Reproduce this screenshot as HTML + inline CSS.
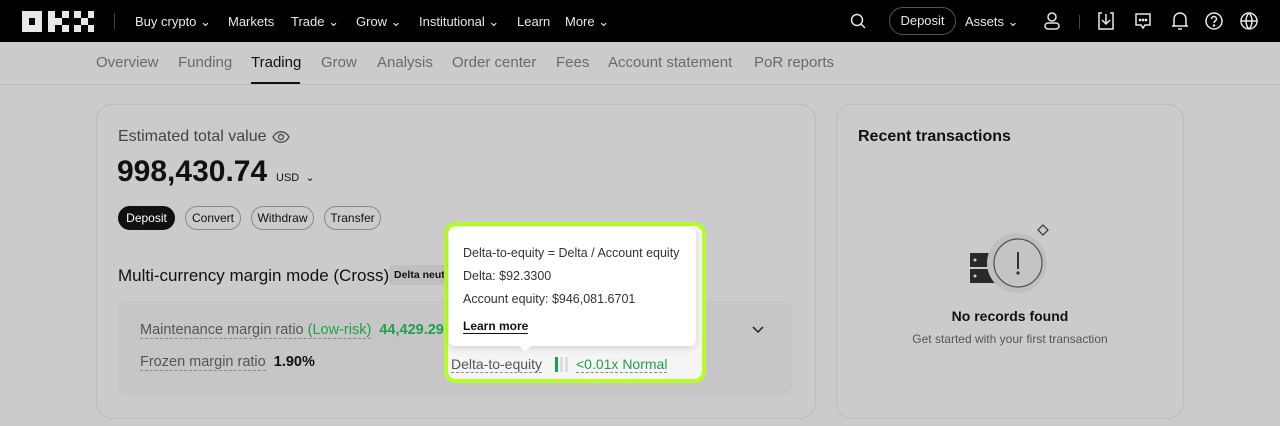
<!DOCTYPE html>
<html><head><meta charset="utf-8"><style>
*{box-sizing:border-box;margin:0;padding:0}
body{width:1280px;height:426px;overflow:hidden;background:#cbcbcb;font-family:"Liberation Sans",sans-serif;position:relative;color:#111}
.top{position:absolute;left:0;top:0;width:1280px;height:42px;background:#000;color:#e8e8e8;font-size:13px}
.top span{position:absolute;top:14px}
.sub{position:absolute;top:42px;left:0;width:1280px;height:43px;border-bottom:1px solid #bdbdbd;font-size:15px;color:#6a6a6a}
.sub span{position:absolute;top:12px}
.card{position:absolute;border:1px solid #bcbcbc;border-radius:16px}
.abs{position:absolute}
.btn{position:absolute;top:206px;height:24px;border:1px solid #8a8a8a;border-radius:12px;font-size:12px;line-height:22px;text-align:center}
.dash{border-bottom:1px dashed #8a8a8a}
</style></head><body>
<div class="top">
<svg class="abs" style="left:22px;top:11px" width="72" height="22"><g fill="#e8e8e8"><rect x="0" y="0" width="20" height="21"/><rect x="26" y="0" width="7" height="21"/><rect x="33" y="7" width="7" height="7"/><rect x="40" y="0" width="7" height="7"/><rect x="40" y="14" width="7" height="7"/><rect x="52" y="0" width="7" height="7"/><rect x="66" y="0" width="6" height="7"/><rect x="59" y="7" width="7" height="7"/><rect x="52" y="14" width="7" height="7"/><rect x="66" y="14" width="6" height="7"/></g><rect x="7" y="7" width="6" height="7" fill="#000"/></svg>
<div class="abs" style="left:114px;top:13px;width:1px;height:16px;background:#444"></div>
<span style="left:135px">Buy crypto ⌄</span><span style="left:228px">Markets</span><span style="left:291px">Trade ⌄</span><span style="left:356px">Grow ⌄</span><span style="left:419px">Institutional ⌄</span><span style="left:517px">Learn</span><span style="left:565px">More ⌄</span>
<svg class="abs" style="left:850px;top:13px" width="16" height="16" fill="none" stroke="#e8e8e8" stroke-width="1.5"><circle cx="7" cy="7" r="5.5"/><path d="M11 11l4 4"/></svg>
<div class="abs" style="left:889px;top:7px;width:67px;height:28px;border:1px solid #555;border-radius:14px;text-align:center;line-height:26px">Deposit</div>
<span style="left:965px">Assets ⌄</span>
<svg class="abs" style="left:1043px;top:11px" width="18" height="20" fill="none" stroke="#e8e8e8" stroke-width="1.5"><circle cx="9" cy="6" r="4"/><rect x="2" y="12" width="14" height="6" rx="3"/></svg>
<div class="abs" style="left:1079px;top:15px;width:1px;height:14px;background:#444"></div>
<svg class="abs" style="left:1097px;top:11px" width="18" height="20" fill="none" stroke="#e8e8e8" stroke-width="1.5"><path d="M5 2H2v16h14V2h-3M9 3v10M5 9l4 4 4-4"/></svg>
<svg class="abs" style="left:1134px;top:12px" width="18" height="18" fill="none" stroke="#e8e8e8" stroke-width="1.5"><path d="M2 2h14v11H11l-2 3-2-3H2z"/><circle cx="6" cy="8" r=".6" fill="#e8e8e8"/><circle cx="9" cy="8" r=".6" fill="#e8e8e8"/><circle cx="12" cy="8" r=".6" fill="#e8e8e8"/></svg>
<svg class="abs" style="left:1171px;top:11px" width="18" height="20" fill="none" stroke="#e8e8e8" stroke-width="1.5"><path d="M3 15V8a6 6 0 0112 0v7zM1 15h16M7 18h4"/></svg>
<svg class="abs" style="left:1205px;top:12px" width="18" height="18" fill="none" stroke="#e8e8e8" stroke-width="1.5"><circle cx="9" cy="9" r="8"/><path d="M6.5 7a2.5 2.5 0 115 0c0 2-2.5 2-2.5 4"/><circle cx="9" cy="13.5" r=".5"/></svg>
<svg class="abs" style="left:1240px;top:12px" width="18" height="18" fill="none" stroke="#e8e8e8" stroke-width="1.5"><circle cx="9" cy="9" r="8"/><path d="M1 9h16M9 1c-4 4-4 12 0 16M9 1c4 4 4 12 0 16"/></svg>
</div>
<div class="sub">
<span style="left:96px">Overview</span><span style="left:178px">Funding</span><span style="left:251px;color:#111">Trading</span><span style="left:321px">Grow</span><span style="left:377px">Analysis</span><span style="left:452px">Order center</span><span style="left:556px">Fees</span><span style="left:608px">Account statement</span><span style="left:754px">PoR reports</span>
<div class="abs" style="left:251px;top:40px;width:49px;height:2px;background:#111"></div>
</div>
<div class="card" style="left:96px;top:104px;width:720px;height:315px"></div>
<div class="abs" style="left:118px;top:128px;font-size:16px;color:#444">Estimated total value</div>
<svg class="abs" style="left:272px;top:130px" width="18" height="14" fill="none" stroke="#555" stroke-width="1.4"><path d="M1 7c4-7 12-7 16 0-4 7-12 7-16 0z"/><circle cx="9" cy="7" r="2.5"/></svg>
<div class="abs" style="left:117px;top:155px;font-size:30px;font-weight:bold">998,430.74</div>
<div class="abs" style="left:276px;top:171px;font-size:11px">USD &nbsp;⌄</div>
<div class="btn" style="left:118px;width:57px;background:#111;color:#fff;border-color:#111">Deposit</div>
<div class="btn" style="left:185px;width:56px">Convert</div>
<div class="btn" style="left:251px;width:63px">Withdraw</div>
<div class="btn" style="left:324px;width:57px">Transfer</div>
<div class="abs" style="left:118px;top:266px;font-size:17px">Multi-currency margin mode (Cross)</div>
<div class="abs" style="left:389px;top:265px;width:60px;height:20px;background:#bfbfbf;border-radius:4px;font-size:10.5px;font-weight:bold;line-height:20px;padding-left:5px;overflow:hidden;white-space:nowrap">Delta neutral</div>
<div class="abs" style="left:118px;top:301px;width:674px;height:95px;background:#c6c6c6;border-radius:10px"></div>
<div class="abs" style="left:140px;top:322px;font-size:14.5px;color:#555"><span class="dash">Maintenance margin ratio <span style="color:#1fa04a">(Low-risk)</span></span> <b style="color:#1fa04a">&nbsp;44,429.29%</b></div>
<div class="abs" style="left:140px;top:354px;font-size:14.5px;color:#555"><span class="dash">Frozen margin ratio</span> <b style="color:#111">&nbsp;1.90%</b></div>
<svg class="abs" style="left:752px;top:326px" width="12" height="8" fill="none" stroke="#222" stroke-width="1.5"><path d="M1 1l5 5 5-5"/></svg>
<div class="abs" style="left:444px;top:222px;width:262px;height:161px;border:4px solid #b8fc2a;border-radius:12px;background:#f5f5f5"></div>
<div class="abs" style="left:449px;top:227px;width:247px;height:119px;background:#fff;border-radius:6px;box-shadow:0 2px 8px rgba(0,0,0,.15)"></div>
<div class="abs" style="left:521px;top:342px;width:8px;height:8px;background:#fff;transform:rotate(45deg)"></div>
<div class="abs" style="left:463px;top:242px;font-size:12.5px;color:#333;line-height:23px">Delta-to-equity = Delta / Account equity<br>Delta: $92.3300<br>Account equity: $946,081.6701</div>
<div class="abs" style="left:463px;top:319px;font-size:12px;font-weight:bold;border-bottom:1.5px solid #111">Learn more</div>
<div class="abs" style="left:451px;top:356px;font-size:14px;color:#555"><span class="dash">Delta-to-equity</span></div>
<div class="abs" style="left:555px;top:357px;width:3px;height:15px;background:#1fa04a"></div>
<div class="abs" style="left:560px;top:357px;width:3px;height:15px;background:#ddd"></div>
<div class="abs" style="left:565px;top:357px;width:3px;height:15px;background:#ddd"></div>
<div class="abs" style="left:576px;top:356px;font-size:14px;color:#1fa04a"><span class="dash">&lt;0.01x Normal</span></div>
<div class="card" style="left:836px;top:104px;width:348px;height:315px"></div>
<div class="abs" style="left:858px;top:128px;font-size:16px;font-weight:bold">Recent transactions</div>
<svg class="abs" style="left:965px;top:222px" width="90" height="75"><rect x="5" y="31" width="31" height="14" fill="#2a2a2a"/><rect x="5" y="47" width="31" height="14" fill="#2a2a2a"/><circle cx="10" cy="38" r="1.5" fill="#ccc"/><circle cx="10" cy="54" r="1.5" fill="#ccc"/><circle cx="52" cy="41" r="30" fill="#bfbfbf"/><circle cx="53" cy="41" r="24" fill="#c4c4c4" stroke="#555" stroke-width="1.3"/><path d="M53 30v17" stroke="#333" stroke-width="2"/><circle cx="53" cy="51" r="1.6" fill="#333"/><path d="M78 3l5 5-5 5-5-5z" fill="none" stroke="#333" stroke-width="1.2"/></svg>
<div class="abs" style="left:836px;top:308px;width:348px;text-align:center;font-size:14px;font-weight:bold">No records found</div>
<div class="abs" style="left:836px;top:332px;width:348px;text-align:center;font-size:12px;color:#555">Get started with your first transaction</div>
</body></html>
